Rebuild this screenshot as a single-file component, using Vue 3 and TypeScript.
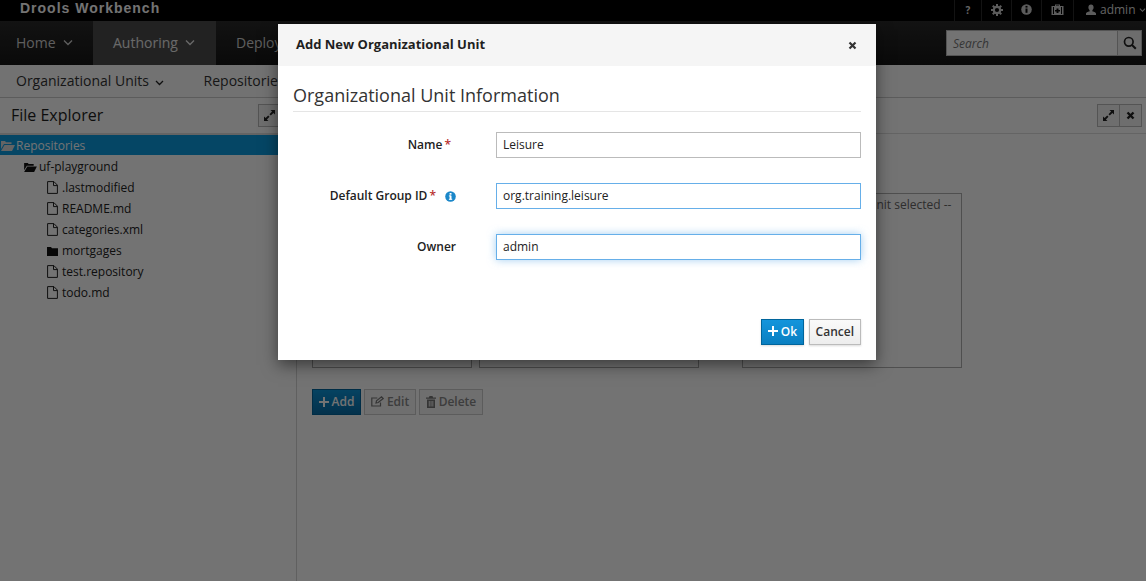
<script setup lang="ts">
const tree = [
  { name: '.lastmodified', kind: 'file' },
  { name: 'README.md', kind: 'file' },
  { name: 'categories.xml', kind: 'file' },
  { name: 'mortgages', kind: 'folder' },
  { name: 'test.repository', kind: 'file' },
  { name: 'todo.md', kind: 'file' },
]

const gearTeeth = [0, 45, 90, 135, 180, 225, 270, 315]
</script>

<template>
  <div class="page">
    <div class="topbar">
      <span class="brand">Drools Workbench</span>
      <div class="util">
        <span class="util-item q">?</span>
        <span class="util-item cog">
          <svg width="12" height="12" viewBox="0 0 12 12">
            <circle cx="6" cy="6" r="3.200" fill="none" stroke="#ccc" stroke-width="2.200" />
            <rect v-for="a in gearTeeth" :key="a" x="5" y="0" width="2" height="2.500" fill="#ccc" :transform="`rotate(${a} 6 6)`" />
          </svg>
        </span>
        <span class="util-item info">
          <svg width="11" height="11" viewBox="0 0 11 11"><circle cx="5.500" cy="5.500" r="5.300" fill="#ccc"/><rect x="4.500" y="4.500" width="2" height="4.300" fill="#000"/><rect x="4.500" y="1.900" width="2" height="1.700" fill="#000"/></svg>
        </span>
        <span class="util-item kit">
          <svg width="13" height="11" viewBox="0 0 13 11"><path fill-rule="evenodd" d="M4 2V.5h5V2h3.500v9H.5V2zM5 2h3V1.400H5zM2 3v7h1V3zm8 0v7h1V3zM5.500 4.500v1.500H4v1.500h1.500V9H7.500V7.500H9V6H7.500V4.500z" fill="#ccc"/></svg>
        </span>
        <span class="util-item user">
          <svg width="12" height="12" viewBox="0 0 12 12"><path d="M6 .5c1.700 0 2.600 1.200 2.600 2.800 0 1.200-.5 2.300-1.200 2.900v1c.5.500 3.600.9 3.600 2.300V11H1v-1.500c0-1.400 3.100-1.800 3.600-2.300v-1C3.900 5.600 3.400 4.500 3.400 3.300 3.400 1.700 4.300.5 6 .5z" fill="#ccc"/></svg>
          admin
          <svg class="chev" width="7" height="6" viewBox="0 0 8 6"><path d="M1 1.500l3 3 3-3" fill="none" stroke="#ccc" stroke-width="1.200"/></svg>
        </span>
      </div>
    </div>

    <div class="mainnav">
      <div class="nav-item home">Home <svg class="chev" width="10" height="7" viewBox="0 0 10 7"><path d="M1 1.500l4 4 4-4" fill="none" stroke="currentColor" stroke-width="1.300"/></svg></div>
      <div class="nav-item active">Authoring <svg class="chev" width="10" height="7" viewBox="0 0 10 7"><path d="M1 1.500l4 4 4-4" fill="none" stroke="currentColor" stroke-width="1.300"/></svg></div>
      <div class="nav-item">Deploy</div>
      <div class="search">
        <span class="search-input">Search</span>
        <span class="search-btn">
          <svg width="14" height="14" viewBox="0 0 14 14"><circle cx="5.800" cy="5.800" r="4.300" fill="none" stroke="#222" stroke-width="1.700"/><path d="M9 9l3.800 3.800" stroke="#222" stroke-width="2"/></svg>
        </span>
      </div>
    </div>

    <div class="subnav">
      <span class="sub-item">Organizational Units <svg class="chev" width="9" height="6" viewBox="0 0 9 6"><path d="M1 1l3.500 3.500L8 1" fill="none" stroke="#222" stroke-width="1.300"/></svg></span>
      <span class="sub-item second">Repositories</span>
    </div>

    <div class="workspace">
      <aside class="explorer">
        <div class="panel-head">
          <span class="panel-title">File Explorer</span>
          <span class="tool-btn">
            <svg width="11" height="11" viewBox="0 0 11 11"><path d="M6.500 0H11v4.500L9.400 2.900 6.800 5.500 5.500 4.200 8.100 1.600zM4.500 11H0V6.500l1.600 1.600 2.600-2.600 1.300 1.300-2.600 2.600z" fill="#222"/></svg>
          </span>
        </div>
        <div class="tree-root">
          <svg width="14" height="11" viewBox="0 0 14 11"><path d="M0 1h4l1 1.200h5.500V4H3L0 9z M3.500 5H14l-3 6H0z" fill="#ddd"/></svg>
          Repositories
        </div>
        <div class="tree-repo">
          <svg width="13" height="10" viewBox="0 0 14 11"><path d="M0 1h4l1 1.200h5.500V4H3L0 9z M3.500 5H14l-3 6H0z" fill="#111"/></svg>
          uf-playground
        </div>
        <div v-for="item in tree" :key="item.name" class="tree-file">
          <svg v-if="item.kind === 'file'" width="11" height="13" viewBox="0 0 11 13"><path d="M.6.6h6.300l3.500 3.500v8.300H.6zM6.500.6v4h3.900" fill="none" stroke="#222" stroke-width="1"/></svg>
          <svg v-else width="11" height="13" viewBox="0 0 11 13"><path d="M0 3h4l1 1.200h6V12H0z" fill="#111"/></svg>
          <span>{{ item.name }}</span>
        </div>
      </aside>

      <section class="content">
        <div class="content-head">
          <span class="tool-group">
            <span class="tool-btn plain">
              <svg width="11" height="11" viewBox="0 0 11 11"><path d="M6.500 0H11v4.500L9.400 2.900 6.800 5.500 5.500 4.200 8.100 1.600zM4.500 11H0V6.500l1.600 1.600 2.600-2.600 1.300 1.300-2.600 2.600z" fill="#222"/></svg>
            </span>
            <span class="tool-btn plain">
              <svg width="9" height="9" viewBox="0 0 9 9"><path d="M1.500 1.500l6 6M7.500 1.500l-6 6" stroke="#222" stroke-width="2.400"/></svg>
            </span>
          </span>
        </div>
        <div class="content-body">
          <div class="lists">
            <div class="list-box"></div>
            <div class="list-box"></div>
            <div class="detail-box">-- No Organizational Unit selected --</div>
          </div>
          <div class="actions">
            <span class="act primary">
              <svg width="10" height="10" viewBox="0 0 10 10"><path d="M4 0h2v4h4v2H6v4H4V6H0V4h4z" fill="#fff"/></svg>
              Add
            </span>
            <span class="act">
              <svg width="13" height="11" viewBox="0 0 13 11"><path d="M9.500 6.500V10H.8V2h5.500M5 7l.5-2.200L10.500.8l1.700 1.700-5 4z" fill="none" stroke="#777" stroke-width="1.200"/></svg>
              Edit
            </span>
            <span class="act">
              <svg width="10" height="12" viewBox="0 0 10 12"><path fill-rule="evenodd" d="M3.500 0h3l.6 1.500H10v1.200H0V1.500h2.900zM1 3.500h8V12H1zM2.800 5v5.500h.9V5zm1.800 0v5.500h.9V5zm1.800 0v5.500h.9V5z" fill="#777"/></svg>
              Delete
            </span>
          </div>
        </div>
      </section>
    </div>

    <div class="backdrop"></div>

    <div class="modal" role="dialog">
      <div class="modal-head">
        <span class="modal-title">Add New Organizational Unit</span>
        <svg class="modal-close" width="9" height="9" viewBox="0 0 9 9"><path d="M1.500 1.500l6 6M7.500 1.500l-6 6" stroke="#333" stroke-width="2.200"/></svg>
      </div>
      <div class="modal-body">
        <h2 class="legend">Organizational Unit Information</h2>
        <div class="field">
          <label class="field-label name">Name<i class="req">*</i></label>
          <input class="field-input" value="Leisure" />
        </div>
        <div class="field">
          <label class="field-label">
            Default Group ID<i class="req">*</i>
            <svg class="help" width="11" height="11" viewBox="0 0 11 11"><circle cx="5.500" cy="5.500" r="5.300" fill="#1b87c9"/><rect x="4.600" y="4.600" width="1.900" height="3.900" fill="#fff"/><rect x="3.900" y="4.400" width="2" height="1" fill="#fff"/><rect x="3.900" y="7.800" width="3.300" height="1" fill="#fff"/><rect x="4.600" y="2" width="1.900" height="1.700" fill="#fff"/></svg>
          </label>
          <input class="field-input soft" value="org.training.leisure" />
        </div>
        <div class="field">
          <label class="field-label">Owner</label>
          <input class="field-input focus" value="admin" />
        </div>
      </div>
      <div class="modal-foot">
        <button class="btn ok">
          <svg width="10" height="10" viewBox="0 0 10 10"><path d="M4 0h2v4h4v2H6v4H4V6H0V4h4z" fill="#fff"/></svg>
          Ok
        </button>
        <button class="btn cancel">Cancel</button>
      </div>
    </div>
  </div>
</template>

<style>
html, body {
  margin: 0;
  background: #fff;
}
</style>

<style scoped>
.page {
  position: relative;
  width: 1146px;
  height: 581px;
  overflow: hidden;
  font-family: "Open Sans", "Noto Sans", sans-serif;
  color: #222;
  background: #f5f5f5;
}

.topbar {
  display: flex;
  justify-content: space-between;
  height: 21px;
  background: #000;
}

.brand {
  margin-left: 20px;
  font-family: "Liberation Sans", Arial, sans-serif;
  font-size: 14px;
  font-weight: 700;
  letter-spacing: 1px;
  line-height: 17px;
  color: #fff;
}

.util {
  display: flex;
  height: 21px;
}

.util-item {
  display: flex;
  align-items: center;
  justify-content: center;
  border-left: 1px solid #2a2a2a;
  box-sizing: border-box;
  font-size: 12px;
  color: #ddd;
  padding-bottom: 2px;
}

.q { width: 27px; font-weight: 700; font-size: 10px; }
.cog { width: 30px; }
.info { width: 30px; }
.kit { width: 32px; }
.user { width: 73px; gap: 3px; justify-content: flex-start; padding-left: 11px; }

.mainnav {
  display: flex;
  align-items: stretch;
  height: 44px;
  background: linear-gradient(#2a2a2a, #161616);
}

.nav-item {
  display: flex;
  align-items: center;
  gap: 7px;
  padding: 0 20px 2px;
  font-size: 14px;
  color: #d1d1d1;
}

.nav-item.home {
  width: 93px;
  padding-left: 16px;
  box-sizing: border-box;
}

.nav-item.active {
  width: 123px;
  box-sizing: border-box;
  background: #4d4d4d;
  color: #e8e8e8;
}

.search {
  display: flex;
  align-self: center;
  height: 26px;
  margin-left: auto;
  margin-right: 4px;
  box-sizing: border-box;
  border: 1px solid #bbb;
  background: #fff;
}

.search-input {
  width: 170px;
  box-sizing: border-box;
  padding-left: 6px;
  font-size: 12px;
  font-style: italic;
  line-height: 25px;
  color: #777;
}

.search-btn {
  display: flex;
  align-items: center;
  justify-content: center;
  width: 23px;
  border-left: 1px solid #bbb;
  background: #f1f1f1;
}

.subnav {
  display: flex;
  align-items: center;
  height: 33px;
  padding-left: 16px;
  padding-bottom: 2px;
  box-sizing: border-box;
  background: #fdfdfd;
  border-bottom: 1px solid #ccc;
  font-size: 14px;
  color: #333;
}

.sub-item .chev {
  margin-left: 2px;
}

.second {
  margin-left: 40px;
}

.workspace {
  display: flex;
  height: 483px;
  background: #fff;
}

.explorer {
  width: 297px;
  box-sizing: border-box;
  border-right: 1px solid #d6d6d6;
}

.panel-head {
  display: flex;
  align-items: center;
  justify-content: space-between;
  height: 37px;
  padding: 0 11px;
  box-sizing: border-box;
  border-bottom: 2px solid #ddd;
}

.panel-title {
  font-size: 16px;
  line-height: 20px;
  margin-bottom: 2px;
  color: #1e1e1e;
}

.tool-btn {
  display: flex;
  align-items: center;
  justify-content: center;
  width: 22px;
  height: 23px;
  margin-right: 5px;
  box-sizing: border-box;
  border: 1px solid #bbb;
  background: #f3f3f3;
}

.tool-btn.plain {
  margin-right: 0;
}

.tool-btn.plain:first-child {
  width: 23px;
}

.tool-btn.plain + .tool-btn.plain {
  border-left: 0;
}

.tree-root {
  display: flex;
  align-items: center;
  gap: 1px;
  height: 20px;
  padding-left: 1px;
  font-size: 12px;
  background: #0d9ce0;
  color: #fff;
}

.tree-repo {
  display: flex;
  align-items: center;
  gap: 2px;
  height: 21px;
  margin-top: 1px;
  padding-left: 24px;
  font-size: 12px;
  color: #222;
}

.tree-file {
  display: flex;
  align-items: center;
  gap: 4px;
  height: 21px;
  padding-left: 47px;
  font-size: 12px;
  color: #222;
}

.content {
  flex: 1;
}

.content-head {
  display: flex;
  justify-content: flex-end;
  align-items: center;
  height: 36px;
  padding-right: 4px;
  box-sizing: border-box;
  border-bottom: 1px solid #ddd;
}

.tool-group {
  display: flex;
}

.content-body {
  padding: 59px 0 0 15px;
}

.lists {
  display: flex;
  align-items: flex-end;
  gap: 7px;
  height: 175px;
}

.list-box {
  width: 160px;
  height: 175px;
  box-sizing: border-box;
  border: 1px solid #aaa;
}

.list-box + .list-box {
  width: 220px;
}

.detail-box {
  width: 220px;
  height: 175px;
  margin-left: 36px;
  padding: 2px 8px;
  box-sizing: border-box;
  border: 1px solid #b0b0b0;
  font-size: 12px;
  color: #666;
  white-space: nowrap;
  overflow: hidden;
  text-align: center;
}

.actions {
  display: flex;
  gap: 3.500px;
  margin-top: 21px;
}

.act {
  display: flex;
  align-items: center;
  gap: 3px;
  height: 26px;
  padding: 0 5.500px 1px;
  box-sizing: border-box;
  border: 1px solid #ccc;
  background: #f5f5f5;
  font-size: 12px;
  font-weight: 600;
  color: #888;
}

.act.primary {
  border-color: #00659c;
  background: linear-gradient(#0d94d8, #0a6ea8);
  color: #fff;
}

.backdrop {
  position: absolute;
  inset: 0;
  background: rgba(0, 0, 0, 0.55);
}

.modal {
  position: absolute;
  top: 24px;
  left: 278px;
  width: 598px;
  height: 336px;
  display: flex;
  flex-direction: column;
  background: #fff;
  box-shadow: 0 5px 15px rgba(0, 0, 0, 0.5);
}

.modal-head {
  display: flex;
  align-items: center;
  justify-content: space-between;
  height: 42px;
  padding: 0 19px 0 18px;
  flex: none;
  box-sizing: border-box;
  background: #f5f5f5;
}

.modal-title {
  font-size: 13px;
  font-weight: 700;
  margin-bottom: 2px;
  color: #1f1f1f;
}

.modal-body {
  flex: 1;
  padding: 0 15px;
}

.legend {
  margin: 17px 0 20px;
  padding-bottom: 4px;
  border-bottom: 1px solid #e5e5e5;
  font-size: 18px;
  font-weight: 400;
  line-height: 24px;
  color: #333;
}

.field {
  display: flex;
  align-items: center;
  height: 26px;
  margin-bottom: 25px;
}

.field-label {
  width: 163px;
  box-sizing: border-box;
  flex: none;
  padding-bottom: 2px;
  text-align: right;
  font-size: 12px;
  font-weight: 600;
  color: #222;
  white-space: nowrap;
}

.field-label.name {
  padding-right: 5px;
}

.req {
  margin-left: 2px;
  font-style: normal;
  color: #b8312f;
}

.help {
  margin-left: 9px;
  vertical-align: -2px;
}

.field-input {
  flex: 1;
  height: 26px;
  margin-left: 40px;
  padding: 0 6px 2px;
  box-sizing: border-box;
  border: 1px solid #bbb;
  outline: none;
  font-family: inherit;
  font-size: 12px;
  color: #222;
  min-width: 0;
}

.field-input.soft {
  border-color: #66afe9;
}

.field-input.focus {
  border-color: #66afe9;
  box-shadow: 0 0 8px rgba(102, 175, 233, 0.6);
}

.modal-foot {
  display: flex;
  justify-content: flex-end;
  gap: 5px;
  padding: 0 15px 15px;
}

.btn {
  display: flex;
  align-items: center;
  gap: 3px;
  height: 26px;
  padding: 0 5.500px 2px;
  box-sizing: border-box;
  font-family: inherit;
  font-size: 12px;
  font-weight: 600;
  box-shadow: 0 1px 2px rgba(0, 0, 0, 0.15);
}

.ok {
  border: 1px solid #00659c;
  background: linear-gradient(#1495dc, #0a7fc1);
  color: #fff;
}

.cancel {
  padding: 0 6px 2px;
  border: 1px solid #bbb;
  background: linear-gradient(#fafafa, #ededed);
  color: #333;
}
</style>
